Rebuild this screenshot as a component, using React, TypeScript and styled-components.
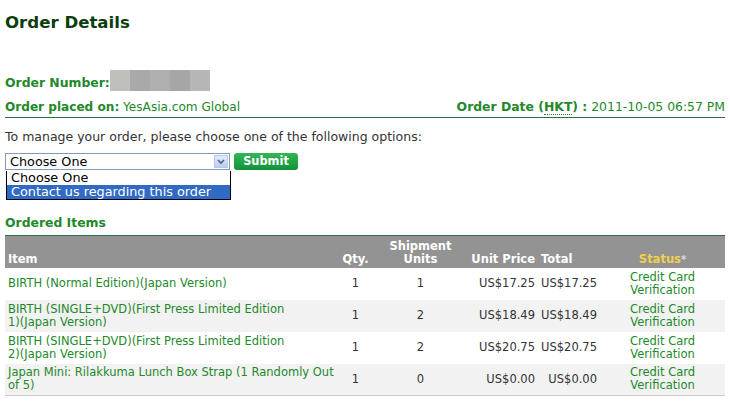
import React from "react";
import styled, { createGlobalStyle } from "styled-components";

const GlobalStyle = createGlobalStyle`
  html, body {
    margin: 0;
    padding: 0;
    background: #ffffff;
  }
  body {
    font-family: "DejaVu Sans", Verdana, sans-serif;
    font-size: 12.4px;
    color: #333333;
  }
`;

const Page = styled.div`
  width: 720px;
  padding: 0 5px;
`;

const Title = styled.h1`
  margin: 0;
  padding-top: 12px;
  height: 22px;
  line-height: 22px;
  font-size: 16.6px;
  font-weight: bold;
  color: #0d3d0d;
`;

const InfoBlock = styled.div`
  margin-top: 37px;
  border-bottom: 1px solid #2e6b4b;
  padding-bottom: 2px;
`;

const InfoRow = styled.div<{ $h: number }>`
  display: flex;
  justify-content: space-between;
  align-items: flex-end;
  height: ${({ $h }) => $h}px;
  line-height: 16px;
  color: #22892a;
`;

const Label = styled.span`
  font-weight: bold;
  color: #22892a;
`;

const Placed = styled.span`
  font-size: 12.1px;
`;

const Abbr = styled.span`
  border-bottom: 1px dotted #22892a;
`;

const Blur = styled.span`
  display: inline-flex;
  vertical-align: bottom;
  height: 21px;
`;

const BlurCell = styled.span<{ $c: string }>`
  width: 20px;
  height: 21px;
  background: ${({ $c }) => $c};
`;

const Prompt = styled.p`
  margin: 0;
  padding-top: 11px;
  line-height: 16px;
  font-size: 12.5px;
  color: #333333;
`;

const Controls = styled.div`
  position: relative;
  display: flex;
  align-items: center;
  gap: 4px;
  margin-top: 8px;
  height: 17px;
`;

const SelectBox = styled.div`
  position: relative;
  box-sizing: border-box;
  width: 225px;
  height: 17px;
  border: 1px solid #7f9db9;
  background: #fff;
  color: #000;
  font-size: 12.8px;
  line-height: 15px;
  padding-left: 4px;
`;

const Arrow = styled.span`
  position: absolute;
  right: 1px;
  top: 1px;
  width: 14px;
  height: 13px;
  background: linear-gradient(#e4ecfb, #b9ccf2);
  border: 1px solid #b4c8f0;
  box-sizing: border-box;
  display: flex;
  align-items: center;
  justify-content: center;
`;

const OptionList = styled.ul`
  position: absolute;
  left: 0;
  top: 17px;
  margin: 0;
  padding: 0;
  list-style: none;
  width: 225px;
  box-sizing: border-box;
  border: 1px solid #000;
  border-top: none;
  background: #fff;
  z-index: 2;
`;

const Option = styled.li<{ $active?: boolean }>`
  height: 14px;
  line-height: 14px;
  padding-left: 4px;
  font-size: 12.8px;
  color: ${({ $active }) => ($active ? "#fff" : "#000")};
  background: ${({ $active }) => ($active ? "#316ac5" : "#fff")};
`;

const SubmitButton = styled.button`
  height: 17px;
  width: 64px;
  padding: 0;
  border: none;
  border-radius: 3px;
  background: linear-gradient(#34b657, #12923a);
  color: #fff;
  font-family: "DejaVu Sans", Verdana, sans-serif;
  font-size: 11.4px;
  font-weight: bold;
  line-height: 15px;
`;

const SectionTitle = styled.h2`
  margin: 0;
  margin-top: 45px;
  height: 16px;
  line-height: 16px;
  font-size: 12.4px;
  font-weight: bold;
  color: #22892a;
`;

const Table = styled.table`
  margin-top: 4px;
  width: 720px;
  border-collapse: collapse;
  border-top: 1px solid #2e6b4b;
  border-bottom: 1px solid #cccccc;
  table-layout: fixed;
  font-size: 11.5px;
`;

const HeadRow = styled.tr`
  height: 32px;
  background: #939393;
`;

const Th = styled.th<{ $align?: string; $gold?: boolean }>`
  padding: 0 3px 2px;
  vertical-align: bottom;
  text-align: ${({ $align }) => $align || "left"};
  color: ${({ $gold }) => ($gold ? "#f2d04a" : "#ffffff")};
  font-size: 11.5px;
  font-weight: bold;
  line-height: 13px;
  white-space: nowrap;
`;

const Star = styled.span`
  color: #dddddd;
  vertical-align: top;
  font-size: 10px;
`;

const Row = styled.tr<{ $alt: boolean }>`
  height: 32px;
  background: ${({ $alt }) => ($alt ? "#f2f2f2" : "#ffffff")};
`;

const Td = styled.td<{ $align?: string; $green?: boolean }>`
  padding: 0 3px;
  vertical-align: middle;
  text-align: ${({ $align }) => $align || "left"};
  color: ${({ $green }) => ($green ? "#22892a" : "#333333")};
  line-height: 13px;
  white-space: nowrap;
`;

const items = [
  { name: ["BIRTH (Normal Edition)(Japan Version)"], qty: 1, units: 1, price: "US$17.25", total: "US$17.25" },
  { name: ["BIRTH (SINGLE+DVD)(First Press Limited Edition", "1)(Japan Version)"], qty: 1, units: 2, price: "US$18.49", total: "US$18.49" },
  { name: ["BIRTH (SINGLE+DVD)(First Press Limited Edition", "2)(Japan Version)"], qty: 1, units: 2, price: "US$20.75", total: "US$20.75" },
  { name: ["Japan Mini: Rilakkuma Lunch Box Strap (1 Randomly Out", "of 5)"], qty: 1, units: 0, price: "US$0.00", total: "US$0.00" },
];

const blurColors = ["#c0bfbc", "#a9a9a9", "#afafaf", "#a6a6a6", "#b6b6b6"];

export default function App() {
  return (
    <Page>
      <GlobalStyle />
      <Title>Order Details</Title>

      <InfoBlock>
        <InfoRow $h={20}>
          <span>
            <Label>Order Number:</Label>
            <Blur>
              {blurColors.map((c) => (
                <BlurCell key={c} $c={c} />
              ))}
            </Blur>
          </span>
        </InfoRow>
        <InfoRow $h={24}>
          <Placed>
            <Label>Order placed on:</Label> YesAsia.com Global
          </Placed>
          <span>
            <Label>
              Order Date (<Abbr>HKT</Abbr>) :
            </Label>{" "}
            2011-10-05 06:57 PM
          </span>
        </InfoRow>
      </InfoBlock>

      <Prompt>To manage your order, please choose one of the following options:</Prompt>

      <Controls>
        <SelectBox>
          Choose One
          <Arrow>
            <svg width="8" height="6" viewBox="0 0 8 6">
              <path d="M1 1 L4 4 L7 1" stroke="#4d6185" strokeWidth="1.6" fill="none" />
            </svg>
          </Arrow>
          <OptionList>
            <Option>Choose One</Option>
            <Option $active>Contact us regarding this order</Option>
          </OptionList>
        </SelectBox>
        <SubmitButton>Submit</SubmitButton>
      </Controls>

      <SectionTitle>Ordered Items</SectionTitle>

      <Table>
        <colgroup>
          <col style={{ width: 333 }} />
          <col style={{ width: 35 }} />
          <col style={{ width: 95 }} />
          <col style={{ width: 70 }} />
          <col style={{ width: 62 }} />
          <col style={{ width: 125 }} />
        </colgroup>
        <thead>
          <HeadRow>
            <Th>Item</Th>
            <Th $align="center">Qty.</Th>
            <Th $align="center">
              Shipment
              <br />
              Units
            </Th>
            <Th $align="right">Unit Price</Th>
            <Th>Total</Th>
            <Th $align="center" $gold>
              Status<Star>*</Star>
            </Th>
          </HeadRow>
        </thead>
        <tbody>
          {items.map((it, i) => (
            <Row key={it.name.join(" ")} $alt={i % 2 === 1}>
              <Td $green>
                {it.name.map((line, j) => (
                  <React.Fragment key={line}>
                    {j > 0 && <br />}
                    {line}
                  </React.Fragment>
                ))}
              </Td>
              <Td $align="center">{it.qty}</Td>
              <Td $align="center">{it.units}</Td>
              <Td $align="right">{it.price}</Td>
              <Td $align="right">{it.total}</Td>
              <Td $align="center" $green>
                Credit Card
                <br />
                Verification
              </Td>
            </Row>
          ))}
        </tbody>
      </Table>
    </Page>
  );
}
